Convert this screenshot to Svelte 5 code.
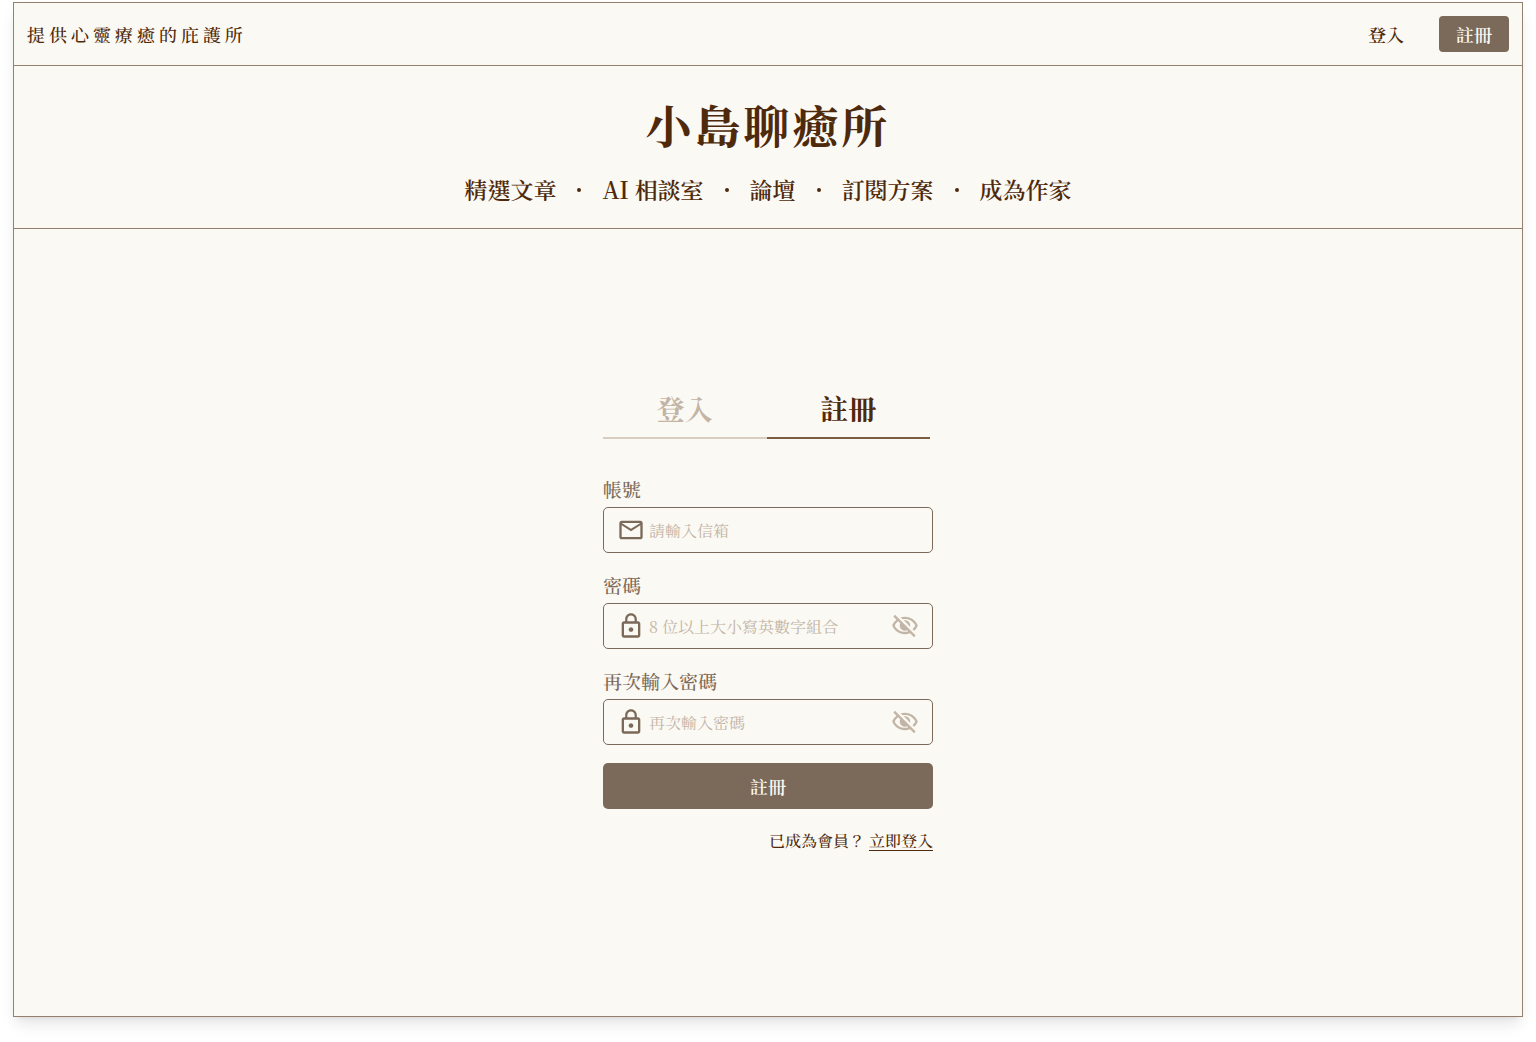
<script lang="ts">
  let mode: 'login' | 'register' = 'register';

  const navItems = [
    { label: '精選文章', href: '#articles' },
    { label: 'AI 相談室', href: '#ai' },
    { label: '論壇', href: '#forum' },
    { label: '訂閱方案', href: '#plans' },
    { label: '成為作家', href: '#writers' }
  ];

  const fields = [
    { id: 'account', label: '帳號', placeholder: '請輸入信箱', secret: false },
    { id: 'password', label: '密碼', placeholder: '8 位以上大小寫英數字組合', secret: true },
    { id: 'confirm', label: '再次輸入密碼', placeholder: '再次輸入密碼', secret: true }
  ];

  let visible: Record<string, boolean> = {};

  function toggleVisible(id: string) {
    visible[id] = !visible[id];
  }
</script>

<div class="page">
  <div class="topbar">
    <p class="tagline">提供心靈療癒的庇護所</p>
    <div class="topbar-actions">
      <a class="login-link" href="#login">登入</a>
      <a class="register-link" href="#register">註冊</a>
    </div>
  </div>

  <header class="header">
    <h1>小島聊癒所</h1>
    <nav class="nav">
      {#each navItems as item, index}
        {#if index > 0}
          <span class="nav-dot"></span>
        {/if}
        <a href={item.href}>{item.label}</a>
      {/each}
    </nav>
  </header>

  <main class="main">
    <form class="form" on:submit|preventDefault>
      <div class="tabs">
        <button type="button" class="tab" class:active={mode === 'login'} on:click={() => (mode = 'login')}>登入</button>
        <button type="button" class="tab" class:active={mode === 'register'} on:click={() => (mode = 'register')}>註冊</button>
      </div>

      {#each fields as field}
        <div class="field">
          <label for={field.id}>{field.label}</label>
          <div class="input-box">
            <svg class="icon" viewBox="0 0 24 24" fill="currentColor" aria-hidden="true">
              {#if field.secret}
                <path d="M12 17c1.1 0 2-.9 2-2s-.9-2-2-2-2 .9-2 2 .9 2 2 2zm6-9h-1V6c0-2.76-2.24-5-5-5S7 3.24 7 6v2H6c-1.1 0-2 .9-2 2v10c0 1.1.9 2 2 2h12c1.1 0 2-.9 2-2V10c0-1.1-.9-2-2-2zM8.9 6c0-1.71 1.39-3.1 3.1-3.1s3.1 1.39 3.1 3.1v2H8.9V6zM18 20H6V10h12v10z" />
              {:else}
                <path d="M20 4H4c-1.1 0-1.99.9-1.99 2L2 18c0 1.1.9 2 2 2h16c1.1 0 2-.9 2-2V6c0-1.1-.9-2-2-2zm0 14H4V8l8 5 8-5v10zm-8-7L4 6h16l-8 5z" />
              {/if}
            </svg>
            <input
              id={field.id}
              type={field.secret && !visible[field.id] ? 'password' : 'text'}
              placeholder={field.placeholder}
            />
            {#if field.secret}
              <button type="button" class="eye" aria-label="顯示密碼" on:click={() => toggleVisible(field.id)}>
                <svg class="icon" viewBox="0 0 24 24" fill="currentColor" aria-hidden="true">
                  <path d="M12 6c3.79 0 7.17 2.13 8.82 5.5-.59 1.22-1.42 2.27-2.41 3.12l1.41 1.41c1.39-1.23 2.49-2.77 3.18-4.53C21.27 7.11 17 4 12 4c-1.27 0-2.49.2-3.64.57l1.65 1.65C10.66 6.09 11.32 6 12 6z" />
                  <path d="M10.93 7.14L13 9.21c.57.25 1.03.71 1.28 1.28l2.07 2.07c.08-.34.14-.7.14-1.07C16.5 9.01 14.48 7 12 7c-.37 0-.72.05-1.07.14z" />
                  <path d="M2.01 3.87l2.68 2.68C3.06 7.83 1.77 9.53 1 11.5 2.73 15.89 7 19 12 19c1.52 0 2.98-.29 4.32-.82l3.42 3.42 1.41-1.41L3.42 2.45 2.01 3.87zM6.11 7.97l1.75 1.75c-.23.55-.36 1.15-.36 1.78 0 2.48 2.02 4.5 4.5 4.5.63 0 1.23-.13 1.77-.36l.98.98c-.88.24-1.8.38-2.75.38-3.79 0-7.17-2.13-8.82-5.5.7-1.43 1.72-2.61 2.93-3.53z" />
                </svg>
              </button>
            {/if}
          </div>
        </div>
      {/each}

      <button type="submit" class="submit">註冊</button>

      <p class="switch">已成為會員？ <a href="#login">立即登入</a></p>
    </form>
  </main>
</div>

<style>
  :global(body) {
    margin: 0;
    background: #fff;
  }

  .page {
    box-sizing: border-box;
    display: flex;
    flex-direction: column;
    min-height: calc(100vh - 27px);
    margin: 2px 13px 25px;
    border: 1px solid #93806f;
    background: #fbf9f4;
    box-shadow: 0 10px 15px -3px rgba(0, 0, 0, 0.1), 0 4px 6px -4px rgba(0, 0, 0, 0.1);
    color: #4e290b;
    font-family: 'Noto Serif TC', 'Noto Serif CJK TC', 'Liberation Serif', 'Noto Sans CJK TC', serif;
  }

  a {
    color: inherit;
    text-decoration: none;
  }

  button,
  input {
    font-family: inherit;
  }

  button {
    cursor: pointer;
  }

  .topbar {
    box-sizing: border-box;
    display: flex;
    align-items: center;
    justify-content: space-between;
    height: 63px;
    padding: 0 13px;
    border-bottom: 1px solid #93806f;
  }

  .tagline {
    margin: 0;
    font-size: 18px;
    font-weight: 500;
    letter-spacing: 4px;
  }

  .topbar-actions {
    display: flex;
    align-items: center;
    gap: 35px;
    font-size: 18px;
    font-weight: 600;
  }

  .register-link {
    padding: 0 17px;
    border-radius: 4px;
    background: #7b6a59;
    color: #fbf9f4;
    line-height: 36px;
  }

  .header {
    display: flex;
    flex-direction: column;
    align-items: center;
    gap: 17px;
    padding: 26px 0 22px;
    border-bottom: 1px solid #93806f;
  }

  h1 {
    margin: 0;
    font-size: 46px;
    font-weight: 700;
    line-height: 64px;
    letter-spacing: 3px;
  }

  .nav {
    display: flex;
    align-items: center;
    gap: 21px;
    font-size: 23px;
    font-weight: 600;
    line-height: 33px;
  }

  .nav-dot {
    width: 4px;
    height: 4px;
    border-radius: 50%;
    background: currentColor;
  }

  .main {
    display: flex;
    flex: 1;
    align-items: center;
    justify-content: center;
  }

  .form {
    width: 330px;
  }

  .tabs {
    display: flex;
    margin: 0 3px 36px 0;
  }

  .tab {
    flex: 1;
    padding: 0 0 13px;
    border: 0;
    border-bottom: 2px solid #d8cfc2;
    background: none;
    color: #c3b5a5;
    font-size: 28px;
    font-weight: 700;
    line-height: 32px;
  }

  .tab.active {
    border-color: #7b5d42;
    color: #4e290b;
  }

  .field {
    margin-bottom: 18px;
  }

  label {
    display: block;
    margin-bottom: 4px;
    color: #7b6a59;
    font-size: 19px;
    font-weight: 500;
    line-height: 28px;
  }

  .input-box {
    box-sizing: border-box;
    display: flex;
    align-items: center;
    gap: 4px;
    height: 46px;
    padding: 0 13px;
    border: 1px solid #7b6a59;
    border-radius: 5px;
    color: #7b6a59;
  }

  .icon {
    display: block;
    flex: none;
    width: 28px;
    height: 28px;
  }

  input {
    flex: 1;
    min-width: 0;
    padding: 2px 0 0;
    border: 0;
    outline: 0;
    background: none;
    color: #4e290b;
    font-size: 16px;
    line-height: 24px;
  }

  input::placeholder {
    color: #c3b5a5;
    opacity: 1;
  }

  .eye {
    padding: 0;
    border: 0;
    background: none;
    color: #c3b5a5;
  }

  .submit {
    display: block;
    width: 100%;
    height: 46px;
    border: 0;
    border-radius: 5px;
    background: #7b6a59;
    color: #fbf9f4;
    font-size: 18px;
    font-weight: 600;
  }

  .switch {
    margin: 20px 0 0;
    font-size: 16px;
    font-weight: 500;
    line-height: 24px;
    text-align: right;
  }

  .switch a {
    text-decoration: underline;
    text-underline-offset: 3px;
  }
</style>
